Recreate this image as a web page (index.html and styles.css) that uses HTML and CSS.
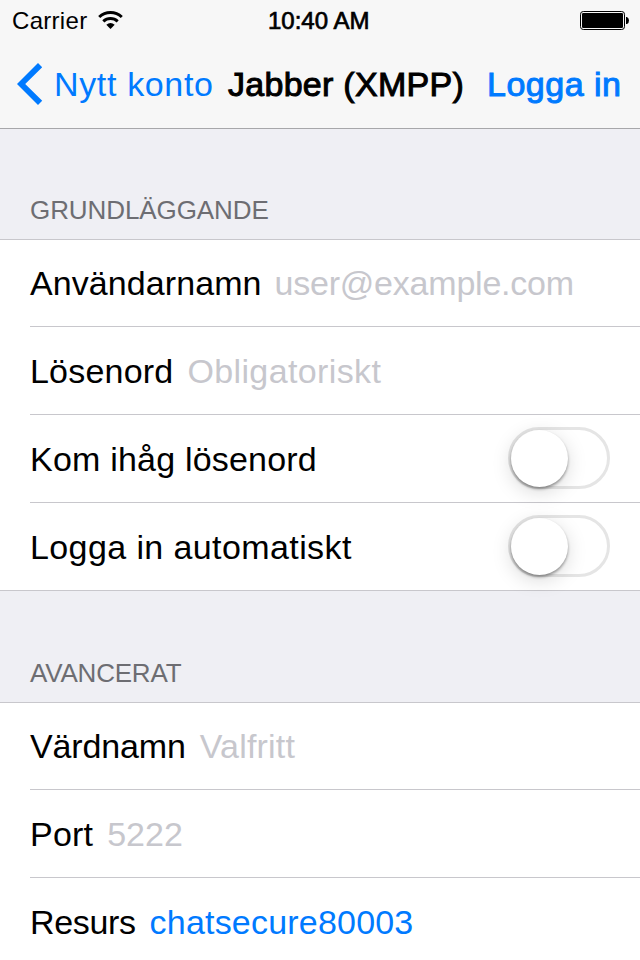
FILE: index.html
```html
<!DOCTYPE html>
<html lang="sv">
<head>
<meta charset="utf-8">
<title>Jabber (XMPP)</title>
<link rel="stylesheet" href="styles.css">
</head>
<body>
<header class="top">
  <div class="status">
    <div class="carrier">
      <span>Carrier</span>
      <svg class="wifi" width="25" height="18" viewBox="0 0 25 18"><g fill="none" stroke="#000" stroke-width="3"><path d="M1.200 6a16.500 16.500 0 0 1 22.600 0"/><path d="M5.300 10.400a10.700 10.700 0 0 1 14.400 0"/></g><path d="M12.500 18L8.300 13.800q4.200-3.600 8.400 0z"/></svg>
    </div>
    <span class="clock medium">10:40 AM</span>
    <svg class="battery" width="50" height="19" viewBox="0 0 50 19"><rect x=".5" y=".5" width="44" height="18" rx="2.800" fill="none" stroke="#000"/><rect x="2" y="2" width="41" height="15" rx="1.200"/><path d="M46 6h1q2 1 2 3.500t-2 3.500h-1z"/></svg>
  </div>
  <nav class="nav">
    <svg class="chevron" width="26" height="42" viewBox="0 0 26 42"><path d="M21 0L25.200 4.200 8.200 21l17 16.800L21 42 0 21z" fill="#007aff"/></svg>
    <span class="back">Nytt konto</span>
    <span class="title medium">Jabber (XMPP)</span>
    <span class="login medium">Logga in</span>
  </nav>
</header>
<main>
  <h2 class="heading">GRUNDLÄGGANDE</h2>
  <section class="group">
    <div class="row"><label class="user">Användarnamn</label><span class="hint address">user@example.com</span></div>
    <div class="row"><label>Lösenord</label><span class="hint required">Obligatoriskt</span></div>
    <div class="row"><label>Kom ihåg lösenord</label><span class="switch"><i class="knob"></i></span></div>
    <div class="row"><label class="auto">Logga in automatiskt</label><span class="switch"><i class="knob"></i></span></div>
  </section>
  <h2 class="heading second">AVANCERAT</h2>
  <section class="group">
    <div class="row"><label class="host">Värdnamn</label><span class="hint optional">Valfritt</span></div>
    <div class="row"><label>Port</label><span class="hint">5222</span></div>
    <div class="row"><label class="resource">Resurs</label><span class="value">chatsecure80003</span></div>
  </section>
</main>
</body>
</html>
```
FILE: styles.css
```css
* { box-sizing: border-box; }
body {
  margin: 0;
  width: 640px;
  height: 960px;
  overflow: hidden;
  background: #efeff4;
  color: #000;
  font: 34px/40px "Liberation Sans", Arial, sans-serif;
  white-space: nowrap;
}
.medium { -webkit-text-stroke: 1px currentColor; }
.top { height: 129px; background: #f7f7f7; border-bottom: 1px solid #a7a7aa; }
.status {
  display: grid;
  grid-template-columns: 268px 1fr 60px;
  height: 40px;
  font-size: 24px;
  line-height: 42px;
}
.carrier { display: flex; padding-left: 12px; letter-spacing: .3px; }
.wifi { flex: none; margin: 11px 145px 0 auto; }
.clock { -webkit-text-stroke-width: .7px; }
.battery { margin-top: 11px; }
.nav { display: flex; height: 88px; padding: 23px 0 0 17px; line-height: 42px; }
.chevron { flex: none; }
.back { width: 185px; padding-left: 11px; color: #007aff; letter-spacing: .65px; }
.title { width: 259px; letter-spacing: .28px; }
.login { color: #007aff; letter-spacing: .5px; }
.heading {
  margin: 0;
  height: 110px;
  padding: 66px 0 0 30px;
  color: #6d6d72;
  font-size: 26px;
  font-weight: 400;
  line-height: 30px;
  letter-spacing: -.08px;
}
.second { height: 111px; padding-top: 67px; letter-spacing: -.2px; }
.group { background: #fff; border-top: 1px solid #c8c7cc; }
.row {
  display: flex;
  align-items: center;
  height: 88px;
  margin-left: 30px;
  padding: 1px 30px 0 0;
  border-bottom: 1px solid #c8c7cc;
}
.row:first-child { height: 87px; padding-top: 0; }
.row:last-child { margin-left: 0; padding-left: 30px; }
label { margin-right: 14px; letter-spacing: .2px; }
.user { margin-right: 13px; letter-spacing: .08px; }
.auto { letter-spacing: .4px; }
.host { letter-spacing: -.15px; }
.resource { letter-spacing: -.35px; }
.hint { color: #c7c7cd; }
.address { letter-spacing: -.22px; }
.required { letter-spacing: .38px; }
.optional { letter-spacing: .2px; }
.value { color: #007aff; letter-spacing: .2px; }
.switch {
  width: 102px;
  height: 62px;
  margin: 0 0 2px auto;
  border: 3px solid #e5e5e5;
  border-radius: 31px;
}
.knob {
  display: block;
  width: 57px;
  height: 57px;
  margin-top: -.5px;
  border-radius: 50%;
  background: #fff;
  box-shadow: 0 2px 3px rgba(0, 0, 0, .38), 0 5px 20px rgba(0, 0, 0, .15);
}
```
